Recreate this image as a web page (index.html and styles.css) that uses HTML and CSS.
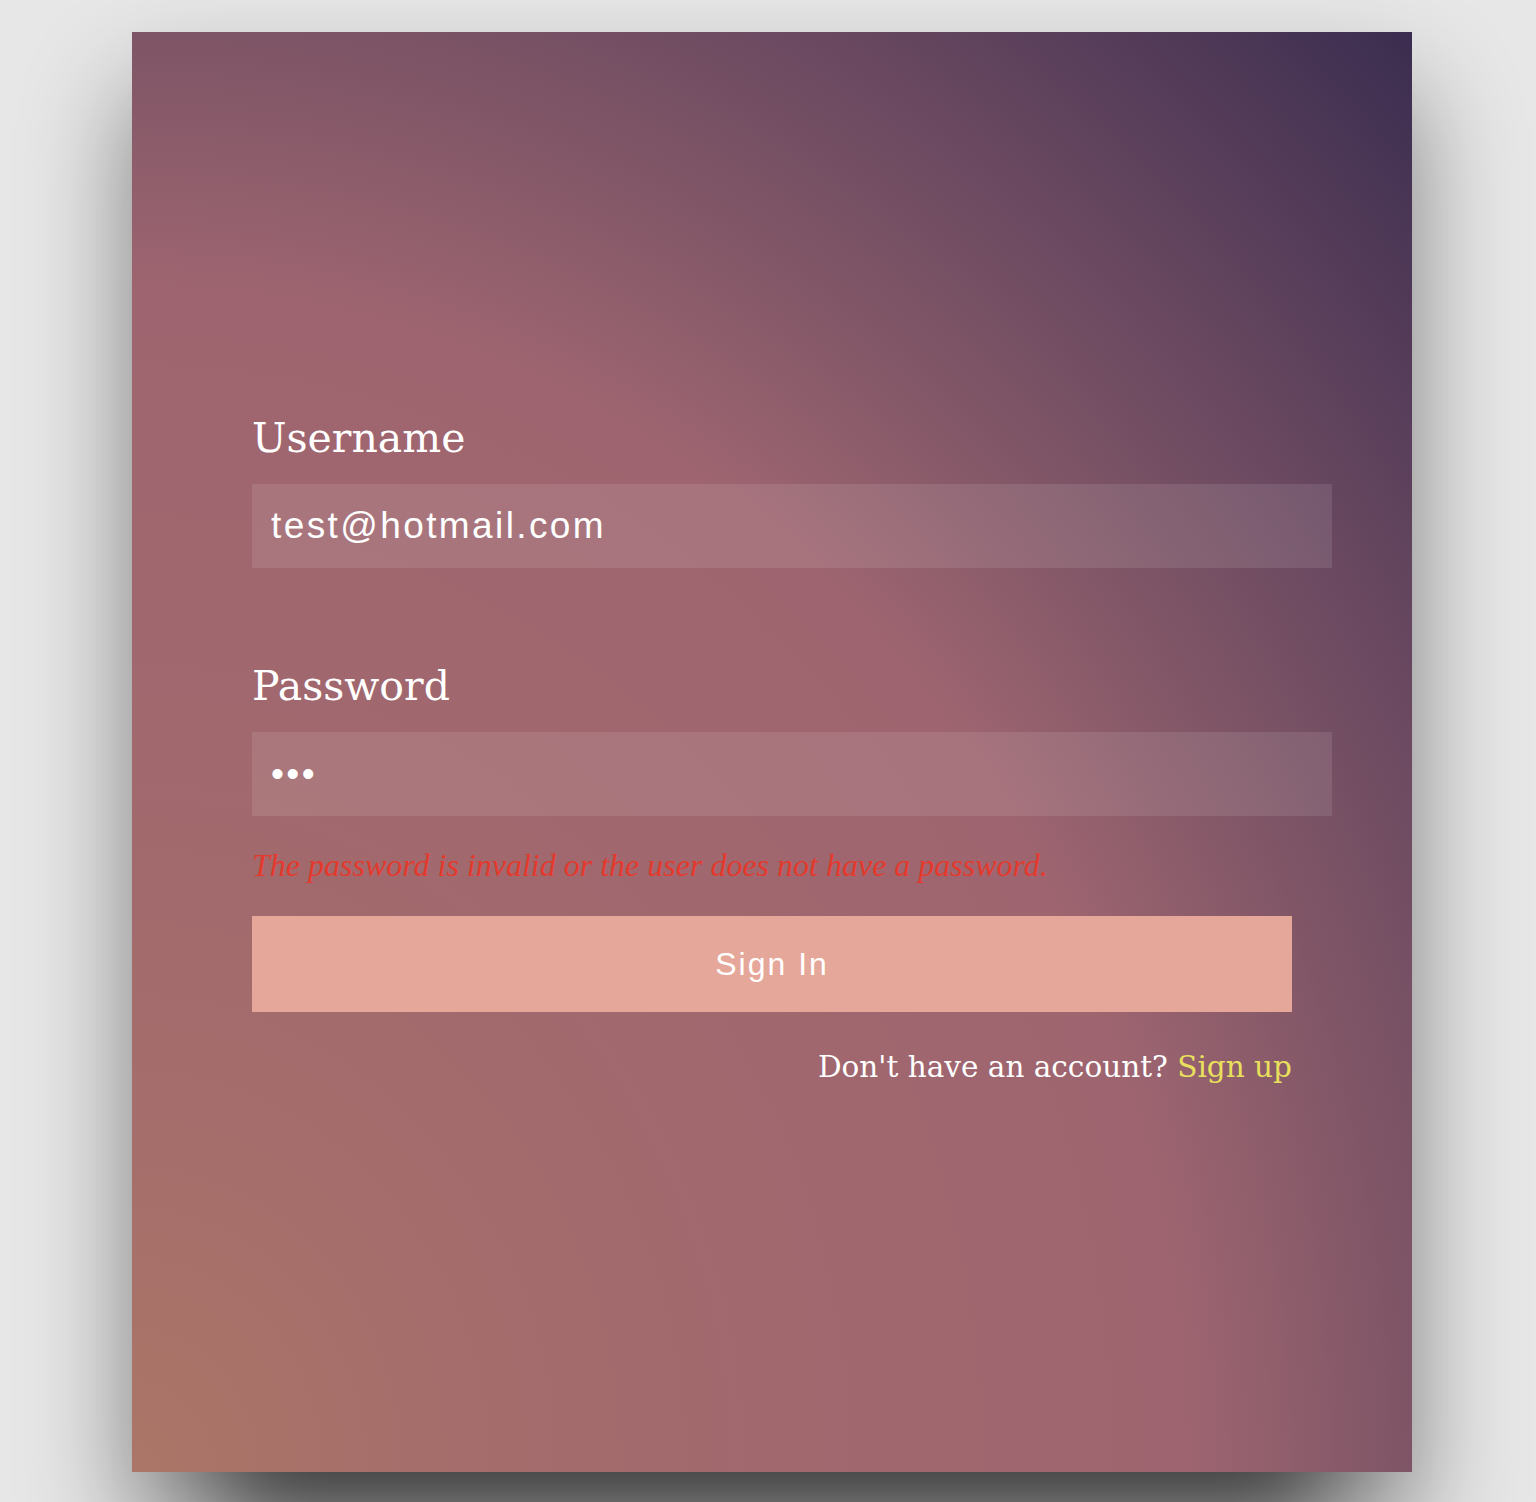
FILE: index.html
```html
<!DOCTYPE html>
<html lang="en">
<head>
<meta charset="utf-8">
<title>Sign In</title>
<link rel="stylesheet" href="styles.css">
</head>
<body>
<div class="page">
  <main class="card">
    <form class="form">
      <div class="field">
        <label class="label" for="username">Username</label>
        <input class="input" id="username" type="text" value="test@hotmail.com">
      </div>
      <div class="field field-pw">
        <label class="label" for="password">Password</label>
        <input class="input" id="password" type="password" value="abc">
      </div>
      <p class="error">The password is invalid or the user does not have a password.</p>
      <div class="actions">
        <button class="btn" type="button">Sign In</button>
        <p class="signup">Don't have an account? <a class="link" href="#">Sign up</a></p>
      </div>
    </form>
  </main>
</div>
</body>
</html>
```

FILE: styles.css
```css
html, body {
  margin: 0;
  padding: 0;
  background: #e7e7e7;
}

body {
  height: 1502px;
  overflow: hidden;
}

.page {
  padding: 32px 0 0 132px;
}

.card {
  width: 1280px;
  height: 1440px;
  box-sizing: border-box;
  padding: 382px 80px 0 120px;
  background: radial-gradient(ellipse farthest-corner at left bottom,
    #ab7667 0%,
    #a56d6b 18%,
    #a1686e 36%,
    #9e6570 58%,
    #7e5566 70.7%,
    #6c4a61 79%,
    #3b2d50 100%);
  box-shadow: 0 60px 100px rgba(0, 0, 0, 0.45),
              0 150px 80px -100px rgba(0, 0, 0, 0.5);
}

.form {
  margin: 0;
}

.field {
  display: flex;
  flex-direction: column;
}

.field-pw {
  margin-top: 94px;
}

.label {
  font-family: "DejaVu Serif", serif;
  font-size: 41px;
  line-height: 48px;
  color: #ffffff;
  margin-bottom: 22px;
}

.input {
  display: block;
  width: 100%;
  height: 84px;
  box-sizing: border-box;
  margin: 0;
  padding: 0 19px;
  border: 0;
  outline: 0;
  border-radius: 0;
  background: rgba(255, 255, 255, 0.1);
  color: #ffffff;
  font-family: "Liberation Sans", Arial, sans-serif;
  font-size: 37px;
  letter-spacing: 2.4px;
}

.error {
  margin: 29px 0 31px;
  font-family: "Liberation Serif", "Times New Roman", serif;
  font-style: italic;
  font-size: 32px;
  line-height: 40px;
  color: #e4392c;
}

.actions {
  width: 1040px;
}

.btn {
  display: block;
  width: 100%;
  height: 96px;
  margin: 0;
  padding: 0;
  border: 0;
  border-radius: 0;
  background: #e5a799;
  color: #ffffff;
  font-family: "Liberation Sans", Arial, sans-serif;
  font-size: 32px;
  letter-spacing: 2px;
  cursor: pointer;
}

.signup {
  margin: 35px 0 0;
  text-align: right;
  font-family: "DejaVu Serif", serif;
  font-size: 29.5px;
  line-height: 40px;
  color: #ffffff;
}

.link {
  color: #e8e05c;
  text-decoration: none;
}
```
